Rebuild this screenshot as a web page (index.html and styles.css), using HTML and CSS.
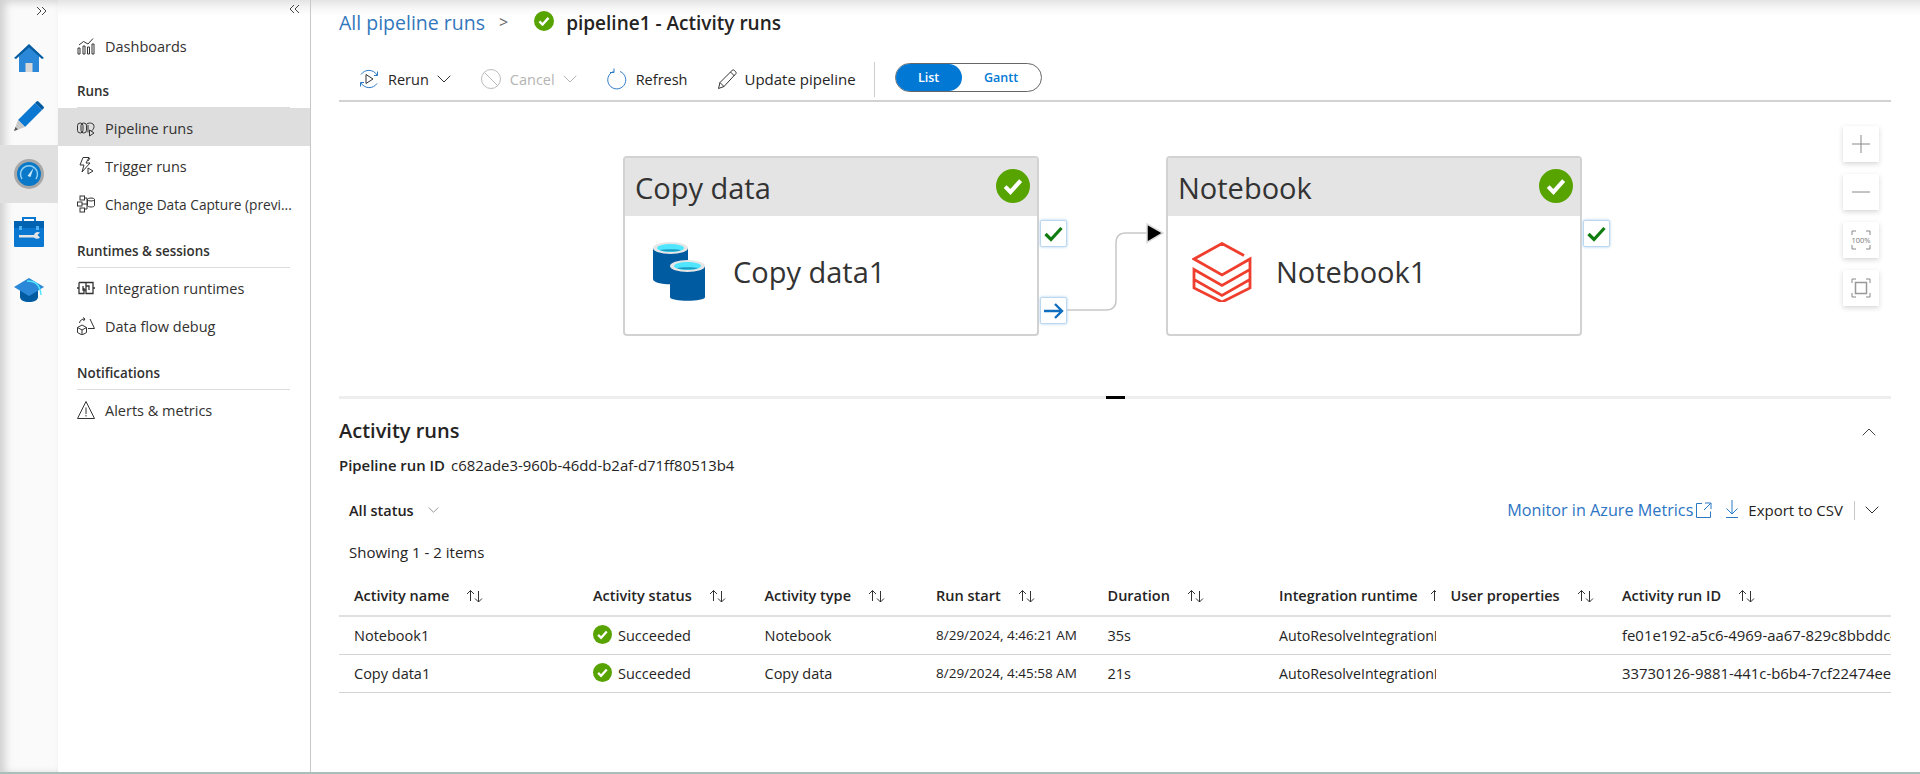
FILE: index.html
```html
<!DOCTYPE html>
<html>
<head>
    <meta charset="UTF-8">
    <title>pipeline1 - Activity runs</title>
    <link rel="stylesheet" href="styles.css">
</head>
<body>
    <!-- shared icons -->
    <svg class="defs" width="0" height="0">
        <symbol id="ok" viewBox="0 0 20 20">
            <circle cx="10" cy="10" r="10" fill="#57a300"/>
            <path d="M5.4 10.4l3.1 3.1 6-6.6" fill="none" stroke="#fff" stroke-width="2.4"/>
        </symbol>
        <symbol id="sort" viewBox="0 0 17 14">
            <path d="M4.5 12V1.5M1 5l3.5-3.5L8 5M12.5 2v11M9 9.5l3.5 3.5 3.5-3.5" fill="none" stroke="#333" stroke-width="1"/>
        </symbol>
        <symbol id="chev" viewBox="0 0 14 8">
            <path d="M.7.7L7 7l6.3-6.3" fill="none" stroke="currentColor" stroke-width="1"/>
        </symbol>
    </svg>

    <div class="app">
        <nav class="rail">
            <div class="rail-toggle">
                <svg width="11" height="10" viewBox="0 0 11 10"><path d="M1 1l4 4-4 4M6 1l4 4-4 4" fill="none" stroke="#444"/></svg>
            </div>
            <div class="rail-item">
                <svg width="30" height="28" viewBox="0 0 30 28">
                    <path d="M5 12L15 3l10 9v16H5z" fill="#2b88d8"/>
                    <path d="M0 14L15 0l15 14-2 1L15 3.500 2 15z" fill="#005ba1"/>
                    <rect x="11.500" y="19" width="7" height="9" fill="#d8d8d8"/>
                </svg>
            </div>
            <div class="rail-item">
                <svg width="30" height="30" viewBox="0 0 30 30">
                    <path d="M4 19L21 2l7 7-17 17z" fill="#0a78d1"/>
                    <path d="M21 2l1.500-1.500a1.500 1.500 0 0 1 2 0l5 5a1.500 1.500 0 0 1 0 2L28 9z" fill="#005ba1"/>
                    <path d="M4 19l7 7-11 4z" fill="#c8c8c8"/>
                    <path d="M0 30l1.500-4 2.500 2.500z" fill="#555"/>
                </svg>
            </div>
            <div class="rail-item is-active">
                <svg width="30" height="30" viewBox="0 0 30 30">
                    <circle cx="15" cy="15" r="15" fill="#a8a8a8"/>
                    <circle cx="15" cy="15" r="12" fill="#0a78c8"/>
                    <path d="M8 20a8.500 8.500 0 1 1 14 0" fill="none" stroke="#8fd0f5" stroke-width="1.500"/>
                    <path d="M13.500 17l6-8-3 9z" fill="#cfeaf9"/>
                </svg>
            </div>
            <div class="rail-item">
                <svg width="30" height="30" viewBox="0 0 30 30">
                    <path d="M9 5V1h12v4" fill="none" stroke="#0a78d1" stroke-width="2"/>
                    <rect y="4" width="30" height="26" rx="1" fill="#0a78d1"/>
                    <rect y="4" width="30" height="7" fill="#0063b1"/>
                    <rect x="5" y="9" width="3" height="4" fill="#50b0f0"/>
                    <rect x="22" y="9" width="3" height="4" fill="#50b0f0"/>
                    <path d="M5 18h15a4 4 0 0 1 6-2.500L23.500 18l2.500 2.500A4 4 0 0 1 20 20.500H5z" fill="#e4e4e4"/>
                </svg>
            </div>
            <div class="rail-item">
                <svg width="30" height="24" viewBox="0 0 30 24">
                    <path d="M6 11v8c0 3 4 5 9 5s9-2 9-5v-8z" fill="#005ba1"/>
                    <path d="M0 9L15 0l15 9-15 9z" fill="#2b88d8"/>
                    <path d="M13 3c8 0 13 3 14 14" fill="none" stroke="#50e6ff" stroke-width="1.500"/>
                </svg>
            </div>
        </nav>

        <aside class="panel">
            <div class="panel-toggle">
                <svg width="11" height="10" viewBox="0 0 11 10"><path d="M5 1L1 5l4 4M10 1L6 5l4 4" fill="none" stroke="#444"/></svg>
            </div>
            <a class="nav-item">
                <svg class="nav-icon" viewBox="0 0 18 18"><path d="M1 11h2v6H1zM6 9h2v8H6zM10.500 10h2v7h-2zM15 7h2v10h-2zM2 8l4.500-3.500L11 7l5-5.500" /></svg>
                Dashboards
            </a>

            <div class="nav-group">
                <div class="nav-label">Runs</div>
                <a class="nav-item is-active">
                    <svg class="nav-icon" viewBox="0 0 18 18"><rect x=".5" y="4" width="5.500" height="10" rx="2.700"/><rect x="4" y="4" width="5.500" height="10" rx="2.700"/><path d="M9.500 5.500c1-2 7.500-2.500 7.500 2 0 2-1 3-2 4v1M11 6v7.500M12.500 11v6l4.500-3z"/></svg>
                    Pipeline runs
                </a>
                <a class="nav-item">
                    <svg class="nav-icon" viewBox="0 0 18 18"><path d="M6 .5h6L9 6h4l-8 9 2-7H3zM13 1l-2 3M11 11v6l5-3z"/></svg>
                    Trigger runs
                </a>
                <a class="nav-item nav-item-long">
                    <svg class="nav-icon" viewBox="0 0 18 18"><rect x="3" y="1" width="4.500" height="4"/><rect x=".5" y="7" width="4.500" height="4"/><rect x="3" y="13" width="4.500" height="4"/><path d="M7.500 3h2.500v11H7.500M5 9h5"/><ellipse cx="14" cy="4.500" rx="3.500" ry="1.500"/><path d="M10.500 4.500v6c0 2 7 2 7 0v-6"/></svg>
                    Change Data Capture (previ...
                </a>
            </div>

            <div class="nav-group">
                <div class="nav-label">Runtimes &amp; sessions</div>
                <a class="nav-item">
                    <svg class="nav-icon" viewBox="0 0 18 18"><path d="M0 9h2M16 9h2M2 3.500h7V11H6V7M2 3.500v11h5V9M9 3.500h7v11H9V7h3v4" stroke-width="1.300"/></svg>
                    Integration runtimes
                </a>
                <a class="nav-item">
                    <svg class="nav-icon" viewBox="0 0 18 18"><path d="M5 8l4.500 2.500v5L5 18 .5 15.500v-5zM.5 10.500L5 13l4.500-2.500M5 13v5M13 2l4.500 9.500H11M2.500 6C3 3 5 2 8 2M6 .5L8 2 6.500 4"/></svg>
                    Data flow debug
                </a>
            </div>

            <div class="nav-group">
                <div class="nav-label">Notifications</div>
                <a class="nav-item">
                    <svg class="nav-icon" viewBox="0 0 18 18"><path d="M9 .5l8.500 17H.5zM9 6.500v6.500M9 14v1.500"/></svg>
                    Alerts &amp; metrics
                </a>
            </div>
        </aside>

        <main class="main">
            <header class="crumbs">
                <a class="crumb-link">All pipeline runs</a>
                <span class="crumb-sep">&gt;</span>
                <svg class="crumb-ok"><use href="#ok"/></svg>
                <h1 class="crumb-title">pipeline1 - Activity runs</h1>
            </header>

            <div class="toolbar">
                <button class="tool">
                    <svg class="tool-icon" viewBox="0 0 22 22"><path d="M3 6.500A9.500 9.500 0 0 1 19 7M19 15.500A9.500 9.500 0 0 1 3 15M16 7.500h3.500V3.500M6 14.500H2.500v4" fill="none" stroke="#2b78c5"/><path d="M8 6.500v9l7-4.500z" fill="none" stroke="#333"/></svg>
                    Rerun
                    <svg class="tool-chev"><use href="#chev"/></svg>
                </button>
                <button class="tool is-disabled">
                    <svg class="tool-icon" viewBox="0 0 22 22"><circle cx="11" cy="11" r="9.500" fill="none" stroke="#bbb"/><path d="M4.500 4.500l13 13" stroke="#bbb"/></svg>
                    Cancel
                    <svg class="tool-chev"><use href="#chev"/></svg>
                </button>
                <button class="tool">
                    <svg class="tool-icon" viewBox="0 0 22 22"><path d="M14 3.500A9 9 0 1 1 7.500 3.500" fill="none" stroke="#2b78c5"/><path d="M8 .5v4H4" fill="none" stroke="#2b78c5"/></svg>
                    Refresh
                </button>
                <button class="tool tool-update">
                    <svg class="tool-icon" viewBox="0 0 22 22"><path d="M1.500 20.500l1.500-6L15.500 2c1-1 4.500 2.500 3.500 3.500L7 18.500zM3 14.500l4 4M13.500 4l4 4" fill="none" stroke="#333"/></svg>
                    Update pipeline
                </button>
                <span class="tool-divider"></span>
                <div class="switch">
                    <span class="switch-on">List</span>
                    <span class="switch-off">Gantt</span>
                </div>
            </div>

            <section class="canvas">
                <svg class="edge">
                    <path d="M728 208H767q10 0 10-10V141q0-10 10-10H808" fill="none" stroke="#c8c8c8" stroke-width="1.500"/>
                    <path d="M808 122l16 9-16 9.500z" fill="#000" stroke="#ddd" stroke-width="1.500"/>
                </svg>

                <div class="node node-copy">
                    <div class="node-head">
                        <span>Copy data</span>
                        <svg class="node-ok"><use href="#ok"/></svg>
                    </div>
                    <div class="node-body">
                        <div class="node-icon">
                            <svg width="52" height="59" viewBox="0 0 52 59">
                                <path d="M0 6v31c0 7 35 7 35 0V6z" fill="#005ba1"/>
                                <ellipse cx="17.500" cy="6" rx="17.500" ry="6" fill="#e6e6e6"/>
                                <ellipse cx="17.500" cy="6" rx="13.500" ry="4" fill="#50e6ff"/>
                                <path d="M7 8c3 2 18 2 21 0-3-1-18-1-21 0z" fill="#1d9cc4"/>
                                <path d="M17 24v31c0 5 35 5 35 0V24z" fill="#005ba1"/>
                                <ellipse cx="34.500" cy="24" rx="17.500" ry="6" fill="#e6e6e6"/>
                                <ellipse cx="34.500" cy="24" rx="13.500" ry="4" fill="#50e6ff"/>
                                <path d="M24 26c3 2 18 2 21 0-3-1-18-1-21 0z" fill="#1d9cc4"/>
                            </svg>
                        </div>
                        <span>Copy data1</span>
                    </div>
                </div>
                <div class="port port-ok port-copy">
                    <svg width="19" height="16" viewBox="0 0 19 16"><path d="M1.500 8l5.500 5.500L17.500 2" fill="none" stroke="#107c10" stroke-width="3.200"/></svg>
                </div>
                <div class="port port-next">
                    <svg width="20" height="16" viewBox="0 0 20 16"><path d="M0 8h18M11 1l7 7-7 7" fill="none" stroke="#106ebe" stroke-width="2.400"/></svg>
                </div>

                <div class="node node-book">
                    <div class="node-head">
                        <span>Notebook</span>
                        <svg class="node-ok"><use href="#ok"/></svg>
                    </div>
                    <div class="node-body">
                        <div class="node-icon">
                            <svg width="60" height="60" viewBox="0 0 60 60">
                                <path d="M52 13.500L30 1.500 2 17l28 16 28-16v10.500L30 43.500 2 27.500v10l28 16 28-16v-10M2 37.500V46l28 14 28-14v-8.500" fill="none" stroke="#ef3e2d" stroke-width="2.800"/>
                            </svg>
                        </div>
                        <span>Notebook1</span>
                    </div>
                </div>
                <div class="port port-ok port-book">
                    <svg width="19" height="16" viewBox="0 0 19 16"><path d="M1.500 8l5.500 5.500L17.500 2" fill="none" stroke="#107c10" stroke-width="3.200"/></svg>
                </div>

                <div class="zoom-tools">
                    <button class="zoom-btn"><svg width="20" height="20" viewBox="0 0 20 20"><path d="M10 1v18M1 10h18" stroke="#888"/></svg></button>
                    <button class="zoom-btn"><svg width="20" height="20" viewBox="0 0 20 20"><path d="M1 10h18" stroke="#888"/></svg></button>
                    <button class="zoom-btn">
                        <svg width="20" height="20" viewBox="0 0 20 20">
                            <path d="M1 5V1h4M15 1h4v4M19 15v4h-4M5 19H1v-4" fill="none" stroke="#888"/>
                            <text class="zoom-label" x="10" y="12.500" text-anchor="middle">100%</text>
                        </svg>
                    </button>
                    <button class="zoom-btn"><svg width="20" height="20" viewBox="0 0 20 20"><path d="M1 5V1h4M15 1h4v4M19 15v4h-4M5 19H1v-4" fill="none" stroke="#888"/><rect x="4.500" y="4.500" width="11" height="11" fill="none" stroke="#999" stroke-width="1.500"/></svg></button>
                </div>
                <span class="drag-handle"></span>
            </section>

            <section class="runs">
                <div class="runs-head">
                    <h2 class="runs-title">Activity runs</h2>
                    <svg class="runs-collapse"><use href="#chev"/></svg>
                </div>
                <div class="run-id"><b>Pipeline run ID</b><span>c682ade3-960b-46dd-b2af-d71ff80513b4</span></div>
                <div class="runs-bar">
                    <div class="status-filter">All status <svg class="tool-chev filter-chev"><use href="#chev"/></svg></div>
                    <div class="runs-actions">
                        <a class="metrics-link">Monitor in Azure Metrics</a>
                        <svg class="action-icon" viewBox="0 0 16 16"><path d="M6 1.500H.5v14h14V9.500M9 1h6v6M15 1L8 8" fill="none" stroke="#2b78c5"/></svg>
                        <svg class="action-icon download" viewBox="0 0 14 18"><path d="M7 0v14M1.500 8.500L7 14l5.500-5.500M1 17.500h12" fill="none" stroke="#2b78c5"/></svg>
                        <span class="export">Export to CSV</span>
                        <span class="action-divider"></span>
                        <svg class="tool-chev"><use href="#chev"/></svg>
                    </div>
                </div>
                <div class="count">Showing 1 - 2 items</div>
                <table class="runs-table">
                    <colgroup>
                        <col class="col-name"><col><col><col><col><col><col><col class="col-id">
                    </colgroup>
                    <thead>
                        <tr>
                            <th>Activity name<svg class="sort"><use href="#sort"/></svg></th>
                            <th>Activity status<svg class="sort"><use href="#sort"/></svg></th>
                            <th>Activity type<svg class="sort"><use href="#sort"/></svg></th>
                            <th>Run start<svg class="sort"><use href="#sort"/></svg></th>
                            <th>Duration<svg class="sort"><use href="#sort"/></svg></th>
                            <th>Integration runtime<svg class="sort sort-tight"><use href="#sort"/></svg></th>
                            <th>User properties<svg class="sort"><use href="#sort"/></svg></th>
                            <th>Activity run ID<svg class="sort"><use href="#sort"/></svg></th>
                        </tr>
                    </thead>
                    <tbody>
                        <tr>
                            <td>Notebook1</td>
                            <td><svg class="row-ok"><use href="#ok"/></svg>Succeeded</td>
                            <td>Notebook</td>
                            <td class="cell-date">8/29/2024, 4:46:21 AM</td>
                            <td>35s</td>
                            <td class="cell-runtime">AutoResolveIntegrationRuntime</td>
                            <td></td>
                            <td class="cell-id">fe01e192-a5c6-4969-aa67-829c8bbddc41</td>
                        </tr>
                        <tr>
                            <td>Copy data1</td>
                            <td><svg class="row-ok"><use href="#ok"/></svg>Succeeded</td>
                            <td>Copy data</td>
                            <td class="cell-date">8/29/2024, 4:45:58 AM</td>
                            <td>21s</td>
                            <td class="cell-runtime">AutoResolveIntegrationRuntime</td>
                            <td></td>
                            <td class="cell-id">33730126-9881-441c-b6b4-7cf22474ee52</td>
                        </tr>
                    </tbody>
                </table>
            </section>
        </main>
    </div>
    <div class="bottom-line"></div>
</body>
</html>
```

FILE: styles.css
```css
body {
    margin: 0;
    height: 774px;
    overflow: hidden;
    background-color: #ffffff;
    color: #252423;
    font-family: "Open Sans", "Liberation Sans", sans-serif;
    font-size: 14.5px;
}
.defs {
    display: block;
    height: 0;
}
button {
    font-family: inherit;
    color: inherit;
    background: none;
    border: 0;
    padding: 0;
}
h1, h2 {
    margin: 0;
}

.app {
    display: grid;
    grid-template-columns: 58px 253px 1fr;
    height: 772px;
    background: linear-gradient(#e4e4e4 0, #f6f6f6 8px, #ffffff 16px);
}
.bottom-line {
    height: 2px;
    background-color: #a9bfba;
}

/* left rail */
.rail {
    background-color: #fafafa;
    box-shadow: inset 5px 2px 9px rgba(0, 0, 0, .17);
}
.rail-toggle {
    display: flex;
    justify-content: flex-end;
    align-items: center;
    height: 22px;
    padding-right: 11px;
    margin-bottom: 7px;
}
.rail-item {
    display: flex;
    align-items: center;
    justify-content: center;
    height: 58px;
}
.rail-item.is-active {
    background-color: #e0e0e0;
}

/* nav panel */
.panel {
    border-right: 1px solid #c8c8c8;
    color: #323130;
}
.panel-toggle {
    display: flex;
    justify-content: flex-end;
    align-items: center;
    height: 18px;
    padding: 0 10px 8px 0;
}
.nav-item {
    display: flex;
    align-items: center;
    gap: 10px;
    height: 36px;
    padding: 2px 0 0 19px;
    white-space: nowrap;
}
.nav-item-long {
    font-size: 13.7px;
}
.nav-item.is-active {
    background-color: #dedede;
}
.nav-icon {
    width: 18px;
    height: 18px;
    flex: none;
    fill: none;
    stroke: #333333;
    stroke-width: 1;
}
.nav-group + .nav-group {
    margin-top: 2px;
}
.nav-label {
    box-sizing: border-box;
    height: 44px;
    margin: 0 20px 0 19px;
    padding-top: 17px;
    border-bottom: 1px solid #dddddd;
    font-size: 13.4px;
    font-weight: 600;
    line-height: 20px;
}

/* header and toolbar */
.main {
    min-width: 0;
    padding: 0 29px 0 28px;
}
.crumbs {
    display: flex;
    align-items: center;
    height: 44px;
}
.crumb-link {
    color: #3277bc;
    font-size: 19.5px;
}
.crumb-sep {
    margin-left: 14px;
    color: #666666;
    font-size: 16px;
}
.crumb-ok {
    width: 20px;
    height: 20px;
    margin: -2px 12px 0 26px;
}
.crumb-title {
    padding-top: 1px;
    font-size: 19px;
    font-weight: 600;
}
.toolbar {
    display: flex;
    align-items: center;
    height: 42px;
    margin-top: 14px;
    padding-left: 19px;
    border-bottom: 2px solid #d2d2d2;
}
.tool {
    display: flex;
    align-items: center;
    gap: 8px;
    margin-right: 29px;
    font-size: 14.5px;
    white-space: nowrap;
}
.tool-update {
    gap: 6px;
    margin-right: 28px;
    font-size: 15px;
}
.tool.is-disabled {
    color: #b4b4b4;
}
.tool-icon {
    width: 22px;
    height: 22px;
}
.tool-chev {
    width: 14px;
    height: 8px;
    color: #333333;
}
.is-disabled .tool-chev {
    color: #b4b4b4;
}
.tool-divider {
    width: 1px;
    height: 35px;
    margin-left: -10px;
    background-color: #cccccc;
}
.switch {
    display: flex;
    width: 147px;
    height: 29px;
    margin: -4px 0 0 20px;
    border: 1px solid #666666;
    border-radius: 15px;
    box-sizing: border-box;
    font-size: 12.5px;
    font-weight: 600;
    line-height: 27px;
    text-align: center;
}
.switch-on {
    width: 66px;
    border-radius: 14px;
    background-color: #0078d4;
    color: #ffffff;
}
.switch-off {
    flex: 1;
    color: #0078d4;
}

/* pipeline canvas */
.canvas {
    position: relative;
    height: 294px;
    border-bottom: 3px solid #eeeeee;
}
.edge {
    position: absolute;
    left: 0;
    top: 0;
    width: 100%;
    height: 100%;
}
.node {
    position: absolute;
    top: 54px;
    display: flex;
    flex-direction: column;
    box-sizing: border-box;
    width: 416px;
    height: 180px;
    border: 2px solid #d2d2d2;
    border-radius: 4px;
    background-color: #ffffff;
    color: #333333;
    font-size: 29px;
}
.node-copy {
    left: 284px;
}
.node-book {
    left: 827px;
}
.node-head {
    display: flex;
    align-items: center;
    justify-content: space-between;
    height: 58px;
    padding: 0 7px 0 10px;
    background-color: #e4e4e4;
}
.node-ok {
    width: 34px;
    height: 34px;
    margin-top: -3px;
}
.node-body {
    display: flex;
    flex: 1;
    align-items: center;
    padding-bottom: 7px;
}
.node-icon {
    display: flex;
    justify-content: center;
    width: 107px;
    padding-right: 1px;
    box-sizing: content-box;
}
.port {
    position: absolute;
    display: flex;
    align-items: center;
    justify-content: center;
    width: 25px;
    height: 25px;
    border: 1px solid #bcd8f0;
    border-radius: 2px;
    background-color: #ffffff;
    box-shadow: 0 0 3px #a6cdee;
}
.port-ok {
    top: 118px;
}
.port-copy, .port-next {
    left: 701px;
}
.port-book {
    left: 1244px;
}
.port-next {
    top: 195px;
}
.zoom-tools {
    position: absolute;
    top: 24px;
    right: 12px;
    display: flex;
    flex-direction: column;
    gap: 12px;
}
.zoom-btn {
    display: flex;
    align-items: center;
    justify-content: center;
    width: 36px;
    height: 36px;
    background-color: #ffffff;
    box-shadow: 0 2px 5px rgba(0, 0, 0, .16);
}
.zoom-label {
    fill: #777777;
    font-size: 7.5px;
}
.drag-handle {
    position: absolute;
    left: 767px;
    bottom: -3px;
    width: 19px;
    height: 3px;
    background-color: #000000;
}

/* activity runs */
.runs-head {
    display: flex;
    align-items: center;
    justify-content: space-between;
    height: 24px;
    margin-top: 19px;
}
.runs-title {
    font-size: 20px;
    font-weight: 600;
}
.runs-collapse {
    width: 14px;
    height: 8px;
    margin: 4px 15px 0 0;
    color: #444444;
    transform: rotate(180deg);
}
.run-id {
    display: flex;
    align-items: center;
    height: 20px;
    margin-top: 13px;
    font-size: 14.9px;
}
.run-id b {
    margin-right: 6px;
    font-weight: 600;
}
.runs-bar {
    display: flex;
    align-items: center;
    justify-content: space-between;
    height: 32px;
    margin-top: 19px;
    padding: 0 12px 0 10px;
}
.status-filter {
    display: flex;
    align-items: center;
    font-weight: 600;
}
.filter-chev {
    width: 11px;
    height: 6px;
    margin-left: 14px;
    color: #777777;
}
.runs-actions {
    display: flex;
    align-items: center;
}
.metrics-link {
    color: #2d74c4;
    font-size: 16.2px;
}
.action-icon {
    width: 16px;
    height: 16px;
    margin-left: 3px;
}
.action-icon.download {
    width: 14px;
    height: 18px;
    margin: -2px 9px 0 13px;
}
.export {
    font-size: 15px;
}
.action-divider {
    width: 1px;
    height: 19px;
    margin: 0 10px 0 11px;
    background-color: #c8c8c8;
}
.count {
    height: 20px;
    margin-top: 16px;
    padding-left: 10px;
    font-size: 15px;
    line-height: 20px;
}
.runs-table {
    width: 100%;
    margin-top: 14px;
    border-collapse: collapse;
    table-layout: fixed;
}
.col-name {
    width: 239px;
}
.col-id {
    width: 284px;
}
.runs-table th, .runs-table td {
    overflow: hidden;
    padding: 0 0 0 15px;
    white-space: nowrap;
    text-align: left;
    border-bottom: 1px solid #d4d4d4;
}
.runs-table th {
    height: 38px;
    padding-bottom: 1px;
    font-weight: 600;
    border-bottom-width: 2px;
    border-color: #e0e0e0;
}
.runs-table td {
    height: 36px;
    padding-bottom: 1px;
}
.runs-table .cell-date {
    font-size: 13.5px;
}
.runs-table .cell-runtime {
    font-size: 14.2px;
}
.runs-table .cell-id {
    font-size: 14.9px;
}
.sort {
    width: 17px;
    height: 14px;
    margin-left: 17px;
    vertical-align: -2px;
}
.sort-tight {
    margin-left: 12px;
}
.row-ok {
    width: 19px;
    height: 19px;
    margin-right: 6px;
    vertical-align: -3px;
}
```
